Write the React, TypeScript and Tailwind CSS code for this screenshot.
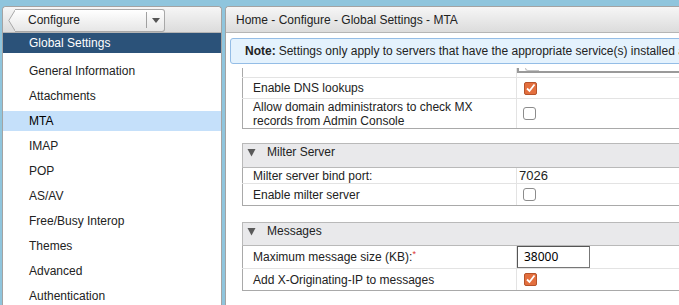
import React from "react";

const Checked = () => (
  <div className="w-[13px] h-[13px] rounded-[2px] bg-[#e36f3e] border border-[#b5532b] flex items-center justify-center">
    <svg width="11" height="11" viewBox="0 0 11 11">
      <path d="M2 5.5 L4.5 8 L9.5 1.5" stroke="white" strokeWidth="1.8" fill="none" />
    </svg>
  </div>
);

const Unchecked = () => (
  <div className="w-[13px] h-[13px] rounded-[3px] bg-white border border-[#8c8c8c]" />
);

const Tri = () => (
  <svg width="9" height="9" viewBox="0 0 9 9" className="mr-[11px]">
    <path d="M0.5 1 L8.5 1 L4.5 8.5 Z" fill="#5a5a5a" />
  </svg>
);

function Row({
  h,
  label,
  children,
  last,
  labelClass = "",
}: {
  h: string;
  label: React.ReactNode;
  children?: React.ReactNode;
  last?: boolean;
  labelClass?: string;
}) {
  return (
    <div className={`flex border-b ${last ? "border-[#a9a9a9]" : "border-[#e3e3e3]"} ${h}`}>
      <div className={`w-[275px] shrink-0 border-l border-l-[#a9a9a9] border-r border-r-[#e3e3e3] pl-[10px] flex items-center ${labelClass}`}>
        {label}
      </div>
      <div className="flex-1 flex items-center">{children}</div>
    </div>
  );
}

function SectionHeader({ title, h }: { title: string; h: string }) {
  return (
    <div className={`${h} bg-[#e9e9eb] border-t border-l border-b border-[#b9b9b9] flex items-start pl-[4px] pt-[1px] leading-[15px]`}>
      <div className="flex items-center h-[15px]">
        <Tri />
        <span>{title}</span>
      </div>
    </div>
  );
}

export default function App() {
  const items = [
    "General Information",
    "Attachments",
    "MTA",
    "IMAP",
    "POP",
    "AS/AV",
    "Free/Busy Interop",
    "Themes",
    "Advanced",
    "Authentication",
  ];
  return (
    <div
      className="w-[679px] h-[305px] overflow-hidden bg-[#8fc5dd] flex pt-[6px] pl-[2px] gap-[3px] text-[12px] text-[#222]"
      style={{ fontFamily: '"Liberation Sans", Arial, sans-serif' }}
    >
      {/* Left panel */}
      <div className="w-[220px] shrink-0 bg-white border border-b-0 border-[#a3a3a3] rounded-t-[4px] flex flex-col">
        <div className="h-[26px] shrink-0 bg-gradient-to-b from-[#f6f6f6] to-[#dcdcdc] border-b border-[#b5b5b5] rounded-t-[4px] flex items-center pl-[5px] pt-[1px]">
          <div className="flex h-[23px]">
            <svg width="7" height="23" viewBox="0 0 7 23" className="shrink-0">
              <defs>
                <linearGradient id="bg" x1="0" y1="0" x2="0" y2="1">
                  <stop offset="0" stopColor="#ffffff" />
                  <stop offset="1" stopColor="#e6e6e6" />
                </linearGradient>
              </defs>
              <path d="M7.5 0.5 L0.8 11.5 L7.5 22.5" fill="url(#bg)" stroke="#a8a8a8" strokeWidth="1" />
            </svg>
            <div className="w-[150px] h-[23px] border-t border-b border-r border-[#a8a8a8] rounded-r-[3px] bg-gradient-to-b from-[#ffffff] to-[#e6e6e6] flex items-center">
              <span className="pl-[13px] flex-1 text-[#222]">Configure</span>
              <div className="h-[16px] border-l border-[#a0a0a0] w-[18px] flex items-center justify-center">
                <svg width="8" height="5" viewBox="0 0 8 5">
                  <path d="M0 0 L8 0 L4 5 Z" fill="#555" />
                </svg>
              </div>
            </div>
          </div>
        </div>
        <div className="h-[20px] shrink-0 bg-[#2b5279] text-white pl-[26px] flex items-center">
          Global Settings
        </div>
        <div className="flex flex-col pt-[8px] gap-[5px]">
          {items.map((it) => (
            <div
              key={it}
              className={`h-[20px] pl-[26px] flex items-center ${it === "MTA" ? "bg-[#c5e0fa] text-black" : ""}`}
            >
              {it}
            </div>
          ))}
        </div>
      </div>

      {/* Right panel */}
      <div className="flex-1 min-w-0 bg-white border-t border-l border-[#a3a3a3] rounded-tl-[4px] flex flex-col overflow-hidden">
        <div className="h-[26px] shrink-0 bg-gradient-to-b from-[#f6f6f6] to-[#dcdcdc] border-b border-[#b5b5b5] flex items-center pl-[10px]">
          Home - Configure - Global Settings - MTA
        </div>
        <div className="mt-[5px] ml-[4px] w-[480px] shrink-0 h-[26px] border border-[#94bde6] rounded-[3px] bg-[#e4f2fd] flex items-center pl-[14px] whitespace-nowrap">
          <b className="mr-[3px]">Note:</b>
          Settings only apply to servers that have the appropriate service(s) installed and enabled.
        </div>
        <div className="pl-[16px] flex flex-col w-[520px]">
          {/* partially visible row */}
          <div className="flex h-[14px] border-b border-[#e3e3e3]">
            <div className="w-[275px] shrink-0 border-l border-[#a9a9a9] border-r border-r-[#e3e3e3] mt-[4px]" />
            <div className="flex-1 flex items-start pt-[4px]">
              <div className="w-[200px] h-[5px] border-l-2 border-b-2 border-[#9a9a9a] relative">
                <div className="absolute left-[6px] top-0 w-[14px] h-[3px] border-l border-b border-[#c4c4c4] rounded-bl-[3px]" />
              </div>
            </div>
          </div>
          <Row h="h-[21px]" label="Enable DNS lookups">
            <div className="pl-[7px]">
              <Checked />
            </div>
          </Row>
          <Row
            h="h-[30px]"
            last
            labelClass="leading-[14px]"
            label={
              <span>
                Allow domain administrators to check MX
                <br />
                records from Admin Console
              </span>
            }
          >
            <div className="pl-[6px]">
              <Unchecked />
            </div>
          </Row>

          <div className="mt-[14px]">
            <SectionHeader title="Milter Server" h="h-[25px]" />
            <Row h="h-[16px]" label="Milter server bind port:">
              <span className="pl-[2px] text-[13px]">7026</span>
            </Row>
            <Row h="h-[22px]" last label="Enable milter server">
              <div className="pl-[6px]">
                <Unchecked />
              </div>
            </Row>
          </div>

          <div className="mt-[16px]">
            <SectionHeader title="Messages" h="h-[24px]" />
            <Row
              h="h-[23px]"
              label={
                <span>
                  Maximum message size (KB):<span className="text-[#d33] text-[9px] align-top">*</span>
                </span>
              }
            >
              <div
                className="w-[73px] h-[22px] border border-[#777] border-t-[#555] border-l-[#555] bg-white flex items-center pl-[6px] text-[12px] text-black"
                style={{ fontFamily: '"Noto Sans", sans-serif' }}
              >
                38000
              </div>
            </Row>
            <Row h="h-[22px]" last label="Add X-Originating-IP to messages">
              <div className="pl-[7px]">
                <Checked />
              </div>
            </Row>
          </div>
        </div>
      </div>
    </div>
  );
}
